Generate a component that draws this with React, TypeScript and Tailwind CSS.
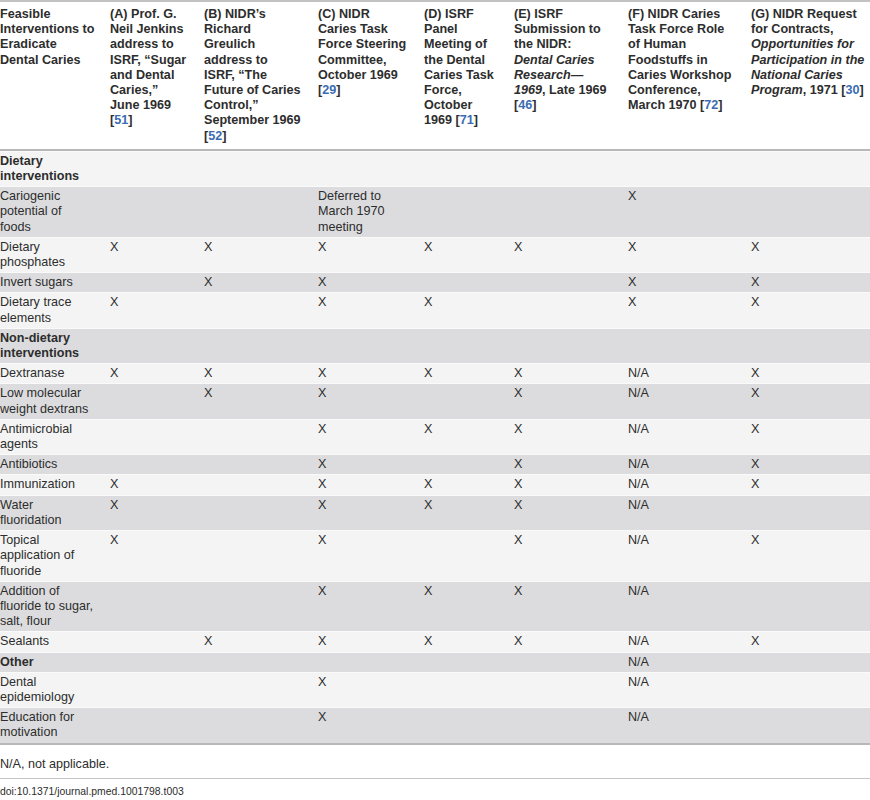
import React from 'react';

const Ref: React.FC<{ n: string }> = ({ n }) => (
  <>[<span className="text-[#3b6cb3]">{n}</span>]</>
);

type Row = { label: string; head?: boolean; cells: string[] };

const ROWS: Row[] = [
  { label: 'Dietary interventions', head: true, cells: ['', '', '', '', '', '', ''] },
  { label: 'Cariogenic potential of foods', cells: ['', '', 'Deferred to March 1970 meeting', '', '', 'X', ''] },
  { label: 'Dietary phosphates', cells: ['X', 'X', 'X', 'X', 'X', 'X', 'X'] },
  { label: 'Invert sugars', cells: ['', 'X', 'X', '', '', 'X', 'X'] },
  { label: 'Dietary trace elements', cells: ['X', '', 'X', 'X', '', 'X', 'X'] },
  { label: 'Non-dietary interventions', head: true, cells: ['', '', '', '', '', '', ''] },
  { label: 'Dextranase', cells: ['X', 'X', 'X', 'X', 'X', 'N/A', 'X'] },
  { label: 'Low molecular weight dextrans', cells: ['', 'X', 'X', '', 'X', 'N/A', 'X'] },
  { label: 'Antimicrobial agents', cells: ['', '', 'X', 'X', 'X', 'N/A', 'X'] },
  { label: 'Antibiotics', cells: ['', '', 'X', '', 'X', 'N/A', 'X'] },
  { label: 'Immunization', cells: ['X', '', 'X', 'X', 'X', 'N/A', 'X'] },
  { label: 'Water fluoridation', cells: ['X', '', 'X', 'X', 'X', 'N/A', ''] },
  { label: 'Topical application of fluoride', cells: ['X', '', 'X', '', 'X', 'N/A', 'X'] },
  { label: 'Addition of fluoride to sugar, salt, flour', cells: ['', '', 'X', 'X', 'X', 'N/A', ''] },
  { label: 'Sealants', cells: ['', 'X', 'X', 'X', 'X', 'N/A', 'X'] },
  { label: 'Other', head: true, cells: ['', '', '', '', '', 'N/A', ''] },
  { label: 'Dental epidemiology', cells: ['', '', 'X', '', '', 'N/A', ''] },
  { label: 'Education for motivation', cells: ['', '', 'X', '', '', 'N/A', ''] },
];

// right padding per column (first = label column)
const PAD = ['pr-[15px]', 'pr-[14px]', 'pr-[16.5px]', 'pr-[15px]', 'pr-[14px]', 'pr-[16px]', 'pr-[14px]', 'pr-[3px]'];

const HEADERS: React.ReactNode[] = [
  <>Feasible Interventions to Eradicate Dental Caries</>,
  <>(A) Prof. G. Neil Jenkins address to ISRF, “Sugar and Dental Caries,” June 1969 <Ref n="51" /></>,
  <>(B) NIDR’s Richard Greulich address to ISRF, “The Future of Caries Control,” September 1969 <Ref n="52" /></>,
  <>(C) NIDR Caries Task Force Steering Committee, October 1969 <Ref n="29" /></>,
  <>(D) ISRF Panel Meeting of the Dental Caries Task Force, October 1969 <Ref n="71" /></>,
  <>(E) ISRF Submission to the NIDR: <i>Dental Caries Research—1969</i>, Late 1969 <Ref n="46" /></>,
  <>(F) NIDR Caries Task Force Role of Human Foodstuffs in Caries Workshop Conference, March 1970 <Ref n="72" /></>,
  <>(G) NIDR Request for Contracts, <i>Opportunities for Participation in the National Caries Program</i>, 1971 <Ref n="30" /></>,
];

export default function App() {
  return (
    <div className="w-[870px] h-[800px] bg-white text-[#2d2d2d] font-['Liberation_Sans',Arial,sans-serif] text-[12.6px] leading-[15.2px]">
      <table className="w-[870px] table-fixed border-separate border-spacing-0">
        <colgroup>
          <col className="w-[110px]" />
          <col className="w-[94px]" />
          <col className="w-[114px]" />
          <col className="w-[106px]" />
          <col className="w-[90px]" />
          <col className="w-[114px]" />
          <col className="w-[123px]" />
          <col className="w-[119px]" />
        </colgroup>
        <thead>
          <tr>
            {HEADERS.map((h, i) => (
              <th
                key={i}
                className={`text-left align-top font-bold pt-[5px] pb-[5px] border-t-2 border-b-2 border-t-[#c2c2c2] border-b-[#b8b8b8] ${PAD[i]}`}
              >
                {h}
              </th>
            ))}
          </tr>
        </thead>
        <tbody>
          {ROWS.map((r, ri) => (
            <tr key={ri} className={ri % 2 === 0 ? 'bg-[#f4f4f4]' : 'bg-[#dcdcde]'}>
              <td className={`align-top pt-[2px] pb-[2px] border-t border-[#fafafa] ${PAD[0]} ${r.head ? 'font-bold' : ''}`}>
                {r.label}
              </td>
              {r.cells.map((c, ci) => (
                <td key={ci} className={`align-top pt-[2px] pb-[2px] border-t border-[#fafafa] ${PAD[ci + 1]}`}>
                  {c}
                </td>
              ))}
            </tr>
          ))}
        </tbody>
      </table>
      <div className="border-t-2 border-[#b8b8b8]">
        <p className="pt-[12px] pb-[6px]">N/A, not applicable.</p>
        <p className="border-t border-[#c6c6c6] pt-[6px] text-[10.4px] leading-[13px]">doi:10.1371/journal.pmed.1001798.t003</p>
      </div>
    </div>
  );
}
